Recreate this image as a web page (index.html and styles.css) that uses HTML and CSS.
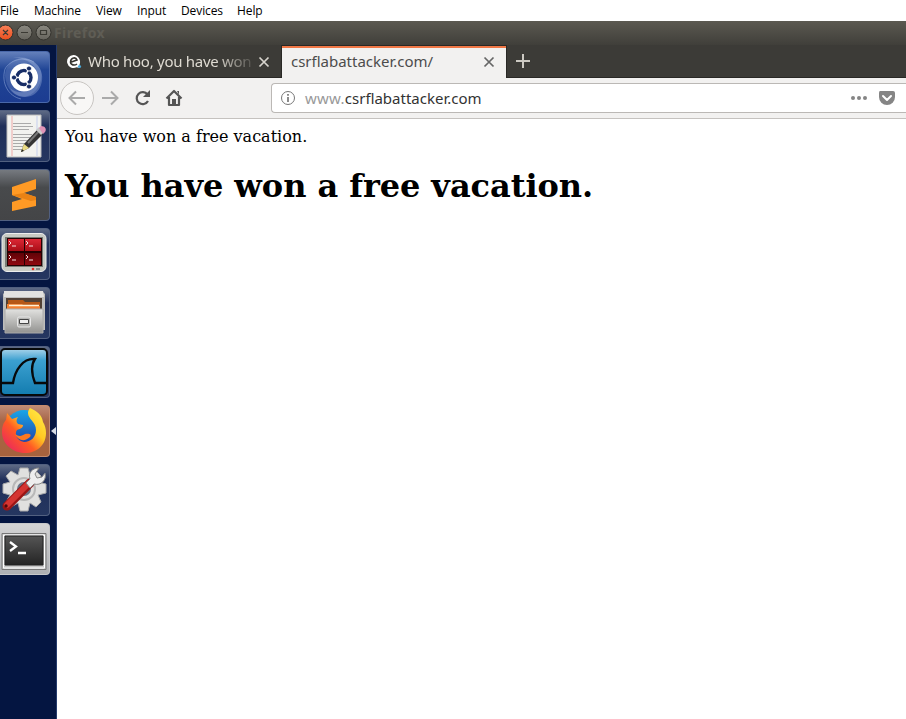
FILE: index.html
```html
<!DOCTYPE html>
<html lang="en">
<head>
<meta charset="utf-8">
<title>Firefox</title>
<link rel="stylesheet" href="styles.css">
</head>
<body>
<nav class="menu"><span class="m-file">File</span><span class="m-machine">Machine</span><span class="m-view">View</span><span class="m-input">Input</span><span class="m-devices">Devices</span><span class="m-help">Help</span></nav>
<header class="titlebar">
  <svg class="controls" width="52" height="24" viewBox="0 0 52 24">
    <defs><linearGradient id="orange" x2="0" y2="1"><stop stop-color="#f98058"/><stop offset="1" stop-color="#e84f1e"/></linearGradient><linearGradient id="grey" x2="0" y2="1"><stop stop-color="#8a8880"/><stop offset="1" stop-color="#66645d"/></linearGradient></defs>
    <g stroke="#33322d"><circle cx="5.500" cy="11.500" r="7.500" fill="url(#orange)"/><circle cx="24.500" cy="11.500" r="7.500" fill="url(#grey)"/><circle cx="43.500" cy="11.500" r="7.500" fill="url(#grey)"/></g>
    <path d="M3 9l5 5M8 9l-5 5M21 11.500h7M40.500 9.500h6v4h-6z" fill="none" stroke="#3b3a34" stroke-width="1.200"/>
  </svg>
  <span class="window-name">Firefox</span>
</header>
<div class="desktop">
<aside class="launcher">
  <div class="tile ubuntu"><svg viewBox="0 0 50 52"><path d="M5 25C5 10 21 2 34 11c11 7 8 20 3 27-12 15-30 7-32-13" fill="#a8bce5" opacity=".22"/><path d="M13 7C31 3 47 17 41 34 35 51 15 48 10 37 20 46 38 40 38 26 38 14 25 6 13 7z" fill="#b8c9ea" opacity=".3"/><path d="M5 18C1 32 8 45 21 48M5 18C10 9 23 5 34 11" fill="none" stroke="#a9bce6" stroke-opacity=".45"/><circle cx="24" cy="26.500" r="14" fill="#fff"/><circle cx="24" cy="26.500" r="7" fill="none" stroke="#172d66" stroke-width="3.400"/><path d="M24 26.500H12M24 26.500l6-10.400M24 26.500l6 10.400" stroke="#fff" stroke-width="1.400"/><circle cx="24" cy="26.500" r="5" fill="#fff"/><g fill="#172d66" stroke="#fff"><circle cx="14" cy="26.500" r="2.600"/><circle cx="29" cy="17.500" r="2.600"/><circle cx="29" cy="35.500" r="2.600"/></g></svg></div>
  <div class="tile"><svg viewBox="0 0 50 52"><path d="M7 5h34v42H7z" fill="#f2f2ef" stroke="#bbb"/><path d="M12 6v40" stroke="#efaaa8"/><path d="M37 6v40" stroke="#c5cfee"/><path d="M13 13.500h18M13 16.500h20M13 19.500h16M13 24.500h19M13 27.500h17M13 30.500h15M13 33.500h16M13 36.500h12M13 39.500h9" stroke="#aaa"/><path d="M21 42l3-8 14-15 5 5-14 14z" fill="#333"/><path d="M28 33l13-14" stroke="#777" stroke-width="2"/><path d="M21 42l3-8 5 4z" fill="#eadb83"/><path d="M21 42l1-3 2 2z" fill="#222"/><path d="M36 20l3-3 5 5-3 3z" fill="#ccc"/><path d="M39 18l2-2c4 0 6 3 4 6l-2 2z" fill="#df94b7"/></svg></div>
  <div class="tile sublime"><svg viewBox="0 0 50 52"><path d="M12 18l24-8v10l-12 4 12 4v9l-24 5V33l10-3-10-4z" fill="#ff9a25"/><path d="M12 26l12-2 12 4v3l-5 1z" fill="#e98214"/></svg></div>
  <div class="tile"><svg viewBox="0 0 50 52"><defs><linearGradient id="red" x2="0" y2="1"><stop stop-color="#dc2835"/><stop offset=".5" stop-color="#a50b14"/><stop offset=".55" stop-color="#620307"/><stop offset="1" stop-color="#8f0810"/></linearGradient></defs><rect x="2" y="5.500" width="44" height="38" rx="5" fill="#c9cbc4" stroke="#eee"/><path d="M5 9h38v30H5z" fill="#777b75"/><path d="M7 10h35v28H7z" fill="#250002"/><path d="M8 11h16v12H8zM25 11h16v12H25zM8 25h16v12H8zM25 25h16v12H25z" fill="url(#red)"/><path d="M9 13l2 2-2 2m3 1h4M26 13l2 2-2 2m3 1h4M9 27l2 2-2 2m3 1h4M26 27l2 2-2 2m3 1h4" fill="none" stroke="#f3dcdc"/><circle cx="33" cy="41" r="1.300" fill="#ef2929"/><path d="M36 41h4" stroke="#888" stroke-width="2"/></svg></div>
  <div class="tile"><svg viewBox="0 0 50 52"><defs><linearGradient id="metal" x2="0" y2="1"><stop stop-color="#e2e2e0"/><stop offset="1" stop-color="#929290"/></linearGradient></defs><path d="M4 6l2-2h36l3 3v36H3V7z" fill="#bdbdbb"/><path d="M4 4h39l1 6H4z" fill="#e2e2e0"/><path d="M6 11h36v12H6z" fill="#514135"/><path d="M8 13h15l2 2h15v8H8z" fill="#b65716"/><path d="M7 17h15l2 2h16v4H7z" fill="#f38132"/><path d="M9 18.500h30" stroke="#fff0d4" stroke-width="1.500"/><path d="M5 22h38v24H5z" fill="url(#metal)" stroke="#aaa"/><rect x="17.500" y="30" width="13" height="10" rx="1.500" fill="#b7b7b5" stroke="#e8e8e8"/><path d="M19.500 32.500h9v4h-9z" fill="#eee" stroke="#444"/></svg></div>
  <div class="tile"><svg viewBox="0 0 50 52"><defs><linearGradient id="blue" x2="0" y2="1"><stop stop-color="#a8d3ea"/><stop offset=".25" stop-color="#3ba0d0"/><stop offset="1" stop-color="#137caf"/></linearGradient></defs><rect x="1" y="3" width="46" height="46" rx="4" fill="url(#blue)" stroke="#07090a" stroke-width="2"/><path d="M2 37h11C15 24 23 12 35 13c-5 7-3 16 0 24h12" fill="none" stroke="#07090a" stroke-width="2.300"/></svg></div>
  <div class="tile firefox"><svg viewBox="0 0 50 52"><defs><linearGradient id="fire" x1="1" x2="0" y2="1"><stop stop-color="#fff34e"/><stop offset=".38" stop-color="#ffc823"/><stop offset=".6" stop-color="#ff5b24"/><stop offset="1" stop-color="#e51670"/></linearGradient><linearGradient id="globe" x2="0" y2="1"><stop stop-color="#18a6e8"/><stop offset="1" stop-color="#2135a1"/></linearGradient></defs><circle cx="24" cy="24" r="19" fill="url(#globe)"/><path d="M30 3c7 3 12 7 13 14 2 3 3 7 3 11 0 12-9 20-21 20S2 39 2 27c0-6 2-10 4-12l1-7 5 6 6-2c-2 3-2 5 0 7l5 1c0 3-3 4-6 5-3 4 0 11 7 12 7 0 12-5 12-12 0-8-8-11-8-17 0-2 1-4 2-5z" fill="url(#fire)"/><path d="M15 29c4 3 7 2 10 0 4-1 7 0 5 3-5 5-12 4-15-3z" fill="#ff7820"/></svg></div>
  <div class="tile"><svg viewBox="0 0 50 52"><path d="M20 4h8l2 7 6-4 5 5-3 6 8 2v9l-8 2 3 7-5 5-6-4-2 8h-8l-2-8-7 4-5-5 4-7-7-2v-9l7-2-4-6 5-5 7 4z" fill="#e0e0df" stroke="#aaa"/><circle cx="24" cy="25" r="11" fill="none" stroke="#b8b8b8" stroke-width="2"/><circle cx="24" cy="25" r="7" fill="#6a7285"/><path d="M7 42l23-23" stroke="#9b1515" stroke-width="9" stroke-linecap="round"/><path d="M7 41l22-22" stroke="#d43431" stroke-width="6" stroke-linecap="round"/><path d="M26 19l4-4c-2-6 2-11 9-11l-4 6 2 4 5-1 3-4c2 7-4 13-11 11l-4 4z" fill="#eee" stroke="#888"/><circle cx="6" cy="42" r="1.700" fill="#4d0909"/></svg></div>
  <div class="tile terminal"><svg viewBox="0 0 50 52"><defs><linearGradient id="screen" x2="0" y2="1"><stop stop-color="#555"/><stop offset="1" stop-color="#242424"/></linearGradient></defs><path d="M2 10.500h44v36H2z" fill="#c8c8c8" stroke="#777"/><path d="M3.500 12h41v33h-41z" fill="none" stroke="#fff"/><path d="M5 13h38v29H5z" fill="url(#screen)" stroke="#202020"/><path d="M10 19l6 4.500-6 4.500M18 30h8" fill="none" stroke="#fff" stroke-width="2.300"/></svg></div>
  <i class="running"></i>
</aside>
<main class="browser">
  <div class="tabs">
    <div class="tab"><svg class="favicon" width="16" height="16" viewBox="0 0 16 16"><path d="M7.500 1a6.500 6.500 0 1 0 3 12.300L14 14l-.6-3A7 7 0 0 0 7.500 1z" fill="#fff"/><path d="M4 8.500l7-2.500C10 3 5 3 4.500 8c0 3 4 4 6.500 2" fill="none" stroke="#35342f" stroke-width="1.600"/><circle cx="13.500" cy="12.500" r="1.600" fill="#4aabdc"/></svg><span class="tab-title fading">Who hoo, you have won</span><svg class="close" width="12" height="12" viewBox="0 0 12 12"><path d="M1.500 1.500l9 9m0-9l-9 9" stroke="#d8d5ce" stroke-width="1.700"/></svg></div>
    <div class="tab active"><span class="tab-title address-title">csrflabattacker.com/</span><svg class="close" width="12" height="12" viewBox="0 0 12 12"><path d="M1.500 1.500l9 9m0-9l-9 9" stroke="#666" stroke-width="1.700"/></svg></div>
    <svg class="plus" width="16" height="16" viewBox="0 0 16 16"><path d="M8 1v14M1 8h14" stroke="#ccc9c2" stroke-width="2"/></svg>
  </div>
  <div class="toolbar">
    <svg class="navigation" width="135" height="40" viewBox="0 0 135 40"><circle cx="20" cy="20" r="16.500" fill="#f8f7f6" stroke="#c8c5c2"/><g fill="none" stroke="#aaa" stroke-width="2"><path d="M28 20H13M19 13.500L12.500 20l6.500 6.500M45 20h15M54 13.500l6.500 6.500-6.500 6.500"/></g><path d="M91 23a6 6 0 1 1-.5-6.500" fill="none" stroke="#555" stroke-width="2.200"/><path d="M93 12v7h-7z" fill="#555"/><path d="M109.500 20.500L117 13l7.500 7.500M112 19v8h10v-8" fill="none" stroke="#555" stroke-width="2.200" stroke-linejoin="round"/><path d="M115 28v-7h4v7" fill="#555"/><path d="M120 13h2v4" fill="#555"/></svg>
    <div class="address"><svg width="16" height="16" viewBox="0 0 16 16"><circle cx="8" cy="8" r="6.500" fill="none" stroke="#777"/><path d="M8 7v5M8 4v1.800" stroke="#777" stroke-width="1.700"/></svg><span class="url"><span>www.</span>csrflabattacker.com</span><svg class="actions" width="54" height="18" viewBox="-6 0 54 18"><g fill="#858585"><circle cx="-3" cy="9" r="2"/><circle cx="3" cy="9" r="2"/><circle cx="9" cy="9" r="2"/><path d="M24 2h13q2 0 2 2v4a8 8 0 0 1-16 0V4q0-2 1-2z"/></g><path d="M27 7l4 4 4-4" fill="none" stroke="#fff" stroke-width="2" stroke-linecap="round" stroke-linejoin="round"/></svg></div>
  </div>
  <article class="page"><p>You have won a free vacation.</p><h1>You have won a free vacation.</h1></article>
</main>
</div>
</body>
</html>
```
FILE: styles.css
```css
* { box-sizing: border-box; }
body { margin: 0; width: 906px; height: 719px; overflow: hidden; background: #fff; font-family: "Noto Sans", sans-serif; }
svg { display: block; flex: none; }
.menu { height: 21px; display: flex; background: #fff; color: #000; font: 12px/21px "Open Sans", sans-serif; white-space: nowrap; }
.menu span { flex: none; letter-spacing: -.1px; }
.m-file { width: 34px; }
.m-machine { width: 62px; }
.m-view { width: 41px; }
.m-input { width: 44px; }
.m-devices { width: 56px; }
.titlebar { height: 24px; display: flex; background: linear-gradient(#5b5951, #403f3a); }
.window-name { margin-left: 2px; font: bold 14px/24px "Noto Sans", sans-serif; letter-spacing: .4px; color: #5f5d55; }
.desktop { display: flex; height: 674px; }
.launcher { position: relative; width: 57px; flex: none; padding-top: 6px; display: flex; flex-direction: column; gap: 7px; background: #041541; border-right: 1px solid #263c6d; }
.tile { width: 50px; height: 52px; flex: none; border: 1px solid #526080; border-left: 0; border-radius: 0 4px 4px 0; background: linear-gradient(#5e6a85, #202f59 30%, #253660); }
.tile svg { width: 50px; height: 52px; margin-top: -1px; }
.ubuntu { background: linear-gradient(#6480bb, #214696 35%, #1c3c91); border-color: #4968aa; }
.sublime { background: linear-gradient(#767a80, #484a4c 35%, #444547); }
.firefox { background: linear-gradient(#c08b76, #a76546 30%, #a7623d); border-color: #c68b6c; }
.terminal { background: linear-gradient(#d4d4d5, #aeb0b3); border-color: #c7c8ca; }
.running { position: absolute; left: 51px; top: 382px; border: 4px solid transparent; border-right: 5px solid #d6dce7; border-left: 0; }
.browser { flex: 1; min-width: 0; }
.tabs { height: 33px; background: #3c3b37; display: flex; border-bottom: 1px solid #292825; }
.tab { width: 224px; height: 33px; display: flex; align-items: center; padding: 0 11px 0 9px; color: #dfdbd2; }
.tab.active { width: 226px; background: #f2f1f0; color: #4c4c4c; border: 1px solid #292825; border-top: 0; border-bottom: 0; box-shadow: inset 0 1px #292825, inset 0 3px #f07746; }
.tab-title { margin-bottom: 2px; font: 15px/20px "Noto Sans", sans-serif; white-space: nowrap; }
.favicon { margin-right: 6px; }
.fading { width: 164px; overflow: hidden; letter-spacing: -.28px; mask-image: linear-gradient(90deg, #000 78%, rgb(0 0 0 / .15)); }
.close { margin-left: auto; }
.address-title { letter-spacing: -.01px; }
.plus { margin: 8px 0 0 8px; }
.toolbar { height: 41px; background: #f2f1f0; border-bottom: 1px solid #c5c2bf; display: flex; }
.address { margin: 5px 0 0 79px; flex: 1; height: 30px; display: flex; align-items: center; background: #fff; border: 1px solid #bbb8b5; border-right: 0; border-radius: 4px 0 0 4px; padding-left: 8px; }
.url { margin: 0 0 1px 9px; color: #333; font: 15px/20px "Noto Sans", sans-serif; white-space: nowrap; }
.url span { color: #999; letter-spacing: .25px; }
.actions { margin-left: auto; margin-right: 2px; }
.page { padding: 8px; color: #000; font-family: "DejaVu Serif", serif; }
.page p { margin: 0; font-size: 16px; line-height: 19px; }
.page h1 { margin: 21px 0 0; font-size: 32px; line-height: 38px; letter-spacing: -.06px; white-space: nowrap; }
```
